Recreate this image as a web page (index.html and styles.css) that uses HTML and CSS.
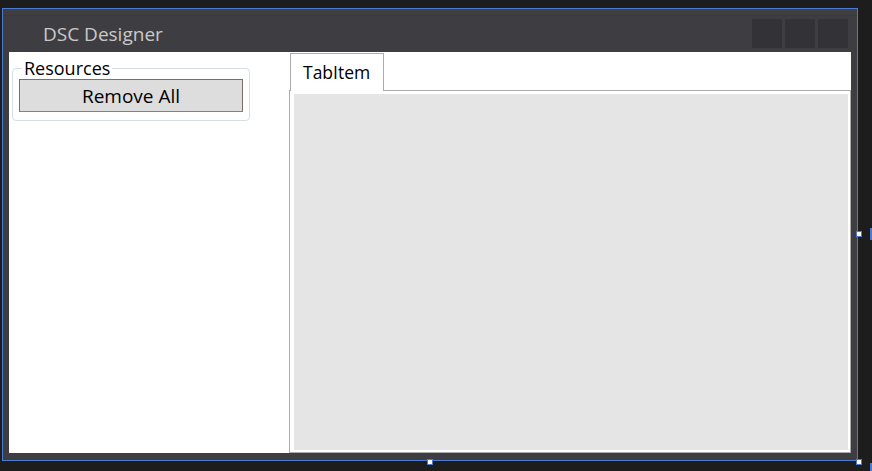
FILE: index.html
```html
<!DOCTYPE html>
<html>
<head>
<meta charset="utf-8">
<link rel="stylesheet" href="styles.css">
</head>
<body>
<div class="canvas">
  <div class="window">
    <div class="titlebar">
      <div class="title">DSC Designer</div>
      <div class="caption-buttons">
        <div class="cap-btn"></div>
        <div class="cap-btn"></div>
        <div class="cap-btn"></div>
      </div>
    </div>
    <div class="content">
      <div class="left-panel">
        <fieldset class="groupbox">
          <legend class="group-title">Resources</legend>
          <button class="btn">Remove All</button>
        </fieldset>
      </div>
      <div class="tabs">
        <div class="tabstrip">
          <div class="tab">TabItem</div>
        </div>
        <div class="tabpanel">
          <div class="tabpanel-inner"></div>
        </div>
      </div>
    </div>
  </div>
  <div class="handle handle-right"></div>
  <div class="handle handle-bottom"></div>
  <div class="handle handle-corner"></div>
  <div class="edge edge-right"></div>
  <div class="edge edge-corner"></div>
</div>
</body>
</html>
```

FILE: styles.css
```css
html, body {
  margin: 0;
  padding: 0;
  background: #1d1d1d;
  font-family: "Open Sans", "Noto Sans", sans-serif;
}
.canvas {
  position: relative;
  width: 872px;
  height: 471px;
  overflow: hidden;
}
.window {
  position: relative;
  margin: 8px 0 0 2px;
  width: 856px;
  height: 453px;
  box-sizing: border-box;
  border: 1px solid #4a7bd0;
  background: #3e3e42;
  display: flex;
  flex-direction: column;
}
.titlebar {
  height: 43px;
  flex: none;
  display: flex;
  justify-content: space-between;
  align-items: flex-start;
  padding: 0 9px 0 40px;
  box-sizing: border-box;
  border-top: 6px solid #3f3f43;
  box-shadow: inset 0 1px 0 #38383c;
}
.title {
  color: #c9c9c9;
  font-size: 19px;
  line-height: 24px;
  margin-top: 7px;
}
.caption-buttons {
  display: flex;
  gap: 3px;
  margin-top: 4px;
}
.cap-btn {
  width: 30px;
  height: 29px;
  background: #333337;
}
.content {
  flex: 1;
  display: flex;
  padding: 0 6px 7px 6px;
}
.left-panel {
  width: 280px;
  flex: none;
  background: #ffffff;
}
.groupbox {
  margin: 5px 0 0 3px;
  width: 238px;
  box-sizing: border-box;
  border: 1px solid #d5dfe5;
  border-radius: 4px;
  padding: 0 6px 8px 6px;
  min-width: 0;
}
.group-title {
  font-size: 18px;
  line-height: 22px;
  color: #000;
  padding: 0 2px;
  margin-left: 3px;
}
.btn {
  display: block;
  width: 224px;
  height: 33px;
  margin: 0;
  padding: 0;
  box-sizing: border-box;
  border: 1px solid #7a7068;
  border-bottom-color: #6c8a90;
  background: #dddddd;
  font-family: "Open Sans", "Noto Sans", sans-serif;
  font-size: 19px;
  color: #000;
  line-height: 30px;
}
.tabs {
  flex: 1;
  display: flex;
  flex-direction: column;
  background: #ffffff;
}
.tabstrip {
  height: 38px;
  flex: none;
  display: flex;
  align-items: flex-end;
}
.tab {
  position: relative;
  z-index: 1;
  margin: 0 0 -1px 1px;
  width: 94px;
  height: 38px;
  box-sizing: border-box;
  border: 1px solid #acacac;
  border-bottom: none;
  background: #ffffff;
  font-size: 17.5px;
  line-height: 36px;
  padding-left: 12px;
  color: #000;
}
.tabpanel {
  flex: 1;
  border: 1px solid #acacac;
  background: #ffffff;
  padding: 3px 2px 2px 4px;
  display: flex;
}
.tabpanel-inner {
  flex: 1;
  background: #e5e5e5;
}
.handle {
  position: absolute;
  width: 6px;
  height: 6px;
  box-sizing: border-box;
  background: #ffffff;
  border: 1px solid #4a7bd0;
}
.handle-right {
  left: 856px;
  top: 231px;
}
.handle-bottom {
  left: 427px;
  top: 459px;
}
.handle-corner {
  left: 856px;
  top: 459px;
}
.edge {
  position: absolute;
  background: #4a7bd0;
}
.edge-right {
  left: 870px;
  top: 228px;
  width: 2px;
  height: 12px;
}
.edge-corner {
  left: 870px;
  top: 463px;
  width: 2px;
  height: 8px;
}
```
